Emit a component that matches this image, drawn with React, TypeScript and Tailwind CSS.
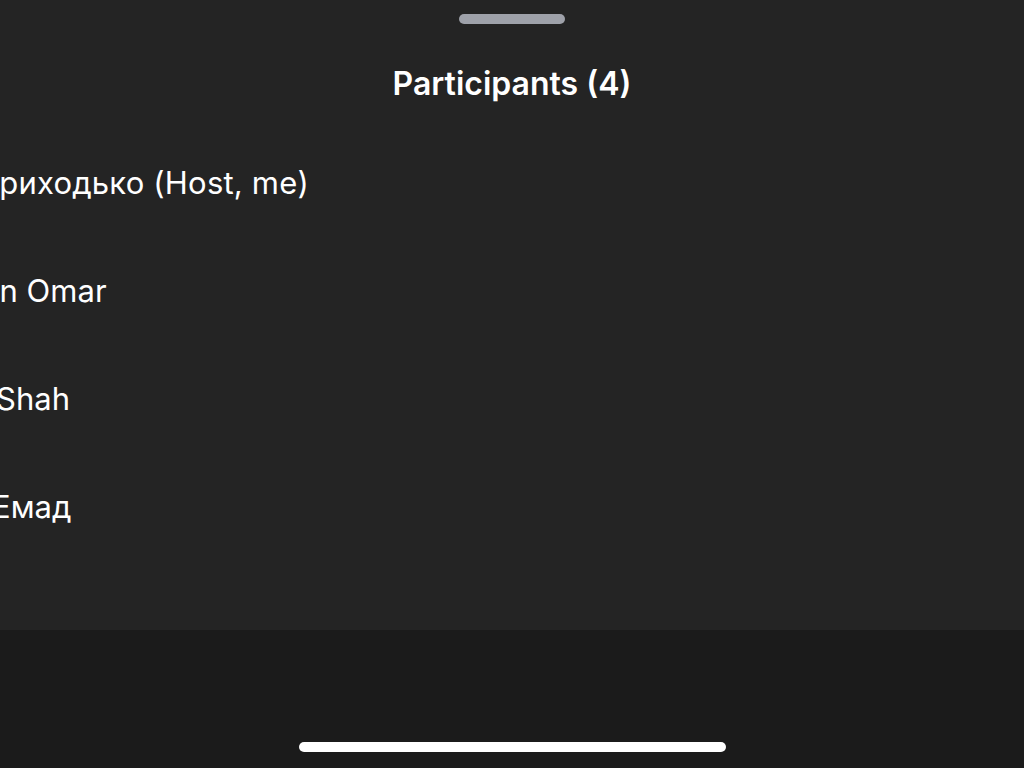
import React from "react";

const rows = [
  { text: "Приходько (Host, me)", shift: "-ml-[24px] tracking-[0.2px]" },
  { text: "Hassan Omar", shift: "-ml-[91px]" },
  { text: "Shah", shift: "-ml-[4px]" },
  { text: "Емад", shift: "-ml-[8px]" },
];

export default function App() {
  return (
    <div
      className="w-[1024px] h-[768px] flex flex-col bg-[#242424] text-white overflow-hidden"
      style={{ fontFamily: "Inter, 'Noto Sans', sans-serif" }}
    >
      <div className="h-[630px] flex flex-col">
        <div className="flex justify-center pt-[14px]">
          <div className="w-[106px] h-[10px] rounded-full bg-[#9ea1a9]" />
        </div>
        <h1 className="mt-[40px] text-center text-[32px] leading-[40px] font-semibold">
          Participants (4)
        </h1>
        <ul className="mt-[25px] flex flex-col">
          {rows.map((r) => (
            <li key={r.text} className="h-[108px] flex items-center whitespace-nowrap">
              <span className={`${r.shift} text-[31px] leading-[40px]`}>{r.text}</span>
            </li>
          ))}
        </ul>
      </div>
      <div className="flex-1 bg-[#1b1b1b] flex flex-col justify-end items-center pb-[16px]">
        <div className="w-[427px] h-[10px] rounded-full bg-white" />
      </div>
    </div>
  );
}
